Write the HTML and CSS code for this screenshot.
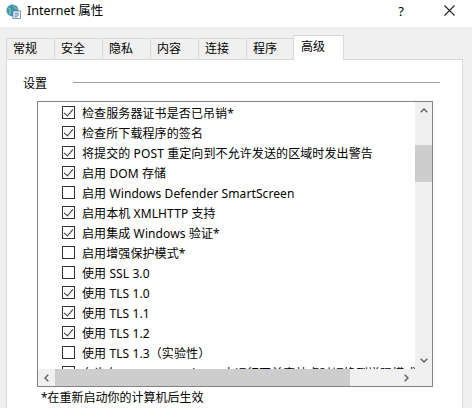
FILE: index.html
```html
<!DOCTYPE html>
<html lang="zh-CN">
<head>
<meta charset="utf-8">
<title>Internet 属性</title>
<link rel="stylesheet" href="styles.css">
</head>
<body>
<div class="window">
  <div class="titlebar">
    <svg class="app-icon" width="15" height="15" viewBox="0 0 15 15">
      <circle cx="6.5" cy="6.5" r="6" fill="#3f8fc9"/>
      <path d="M2 4.5 C4 3.5 5 5.5 4 7 C3 8.5 4.5 10 3.5 11" fill="none" stroke="#7cc46a" stroke-width="1.6"/>
      <path d="M7.5 1.5 C9 2.5 8 4 9.5 4.5 C11 5 11.5 3.5 12 5" fill="none" stroke="#7cc46a" stroke-width="1.4"/>
      <rect x="7" y="7" width="7.5" height="7.5" fill="#ffffff" stroke="#5b7fa8" stroke-width="0.8"/>
      <line x1="8.5" y1="9.2" x2="13" y2="9.2" stroke="#3a6ea5" stroke-width="0.9"/>
      <line x1="8.5" y1="11" x2="13" y2="11" stroke="#3a6ea5" stroke-width="0.9"/>
      <line x1="8.5" y1="12.8" x2="11.5" y2="12.8" stroke="#3a6ea5" stroke-width="0.9"/>
    </svg>
    <span class="title">Internet 属性</span>
    <span class="title-help">?</span>
    <svg class="title-close" width="11" height="11" viewBox="0 0 11 11">
      <path d="M0.5 0.5 L10.5 10.5 M10.5 0.5 L0.5 10.5" stroke="#222" stroke-width="1.1" fill="none"/>
    </svg>
  </div>

  <div class="tabs">
    <div class="tab">常规</div>
    <div class="tab">安全</div>
    <div class="tab">隐私</div>
    <div class="tab">内容</div>
    <div class="tab">连接</div>
    <div class="tab">程序</div>
    <div class="tab tab-active">高级</div>
  </div>

  <div class="panel">
    <div class="group-head">
      <span class="group-label">设置</span>
      <span class="group-line"></span>
    </div>

    <div class="listbox">
      <div class="list-content">
        <div class="row"><span class="cb checked"></span><span>检查服务器证书是否已吊销*</span></div>
        <div class="row"><span class="cb checked"></span><span>检查所下载程序的签名</span></div>
        <div class="row"><span class="cb checked"></span><span>将提交的 POST 重定向到不允许发送的区域时发出警告</span></div>
        <div class="row"><span class="cb checked"></span><span>启用 DOM 存储</span></div>
        <div class="row"><span class="cb"></span><span>启用 Windows Defender SmartScreen</span></div>
        <div class="row"><span class="cb checked"></span><span>启用本机 XMLHTTP 支持</span></div>
        <div class="row"><span class="cb checked"></span><span>启用集成 Windows 验证*</span></div>
        <div class="row"><span class="cb"></span><span>启用增强保护模式*</span></div>
        <div class="row"><span class="cb"></span><span>使用 SSL 3.0</span></div>
        <div class="row"><span class="cb checked"></span><span>使用 TLS 1.0</span></div>
        <div class="row"><span class="cb checked"></span><span>使用 TLS 1.1</span></div>
        <div class="row"><span class="cb checked"></span><span>使用 TLS 1.2</span></div>
        <div class="row"><span class="cb"></span><span>使用 TLS 1.3（实验性）</span></div>
        <div class="row"><span class="cb"></span><span>允许在 Internet Explorer 中运行不兼容站点时切换到增强模式</span></div>
      </div>

      <div class="vscroll">
        <div class="sbtn">
          <svg width="8" height="5" viewBox="0 0 8 5"><polyline points="0.7,4.3 4,1 7.3,4.3" fill="none" stroke="#606060" stroke-width="1.4"/></svg>
        </div>
        <div class="vtrack"><div class="vthumb"></div></div>
        <div class="sbtn">
          <svg width="8" height="5" viewBox="0 0 8 5"><polyline points="0.7,0.7 4,4 7.3,0.7" fill="none" stroke="#606060" stroke-width="1.4"/></svg>
        </div>
      </div>

      <div class="hscroll">
        <div class="sbtn">
          <svg width="5" height="8" viewBox="0 0 5 8"><polyline points="4.3,0.7 1,4 4.3,7.3" fill="none" stroke="#606060" stroke-width="1.4"/></svg>
        </div>
        <div class="htrack"><div class="hthumb"></div></div>
        <div class="sbtn">
          <svg width="5" height="8" viewBox="0 0 5 8"><polyline points="0.7,0.7 4,4 0.7,7.3" fill="none" stroke="#606060" stroke-width="1.4"/></svg>
        </div>
      </div>

      <div class="corner"></div>
    </div>

    <div class="note">*在重新启动你的计算机后生效</div>
  </div>
</div>
</body>
</html>
```

FILE: styles.css
```css
* {
  box-sizing: border-box;
}

html, body {
  margin: 0;
  padding: 0;
  width: 472px;
  height: 408px;
  overflow: hidden;
  background: #f0f0f0;
}

body {
  font-family: "Noto Sans", "Noto Sans CJK SC", sans-serif;
  font-size: 12px;
  color: #000;
}

.window {
  width: 472px;
  height: 408px;
  overflow: hidden;
}

/* title bar */
.titlebar {
  height: 27px;
  background: #fff;
  display: flex;
  align-items: flex-start;
  padding-top: 3px;
  padding-left: 6px;
}

.app-icon {
  flex: none;
  margin-top: 1px;
}

.title {
  margin-left: 6px;
  line-height: 16px;
  font-size: 12.5px;
}

.title-help {
  margin-left: auto;
  line-height: 16px;
  font-size: 13px;
  margin-right: 40px;
}

.title-close {
  margin-top: 2px;
  margin-right: 17px;
}

/* tabs */
.tabs {
  display: flex;
  align-items: flex-end;
  height: 32px;
  padding-left: 6px;
}

.tab {
  width: 49px;
  height: 21px;
  margin-right: -1px;
  border: 1px solid #d9d9d9;
  border-bottom: none;
  background: #f0f0f0;
  padding-left: 6px;
  line-height: 20px;
  position: relative;
}

.tab-active {
  width: 51px;
  height: 25px;
  margin-left: -1px;
  background: #fff;
  padding-left: 7px;
  line-height: 21px;
  margin-bottom: -1px;
  z-index: 1;
}

/* panel */
.panel {
  margin-left: 6px;
  width: 457px;
  height: 360px;
  background: #fff;
  border: 1px solid #d9d9d9;
  border-bottom: none;
}

.group-head {
  display: flex;
  align-items: center;
  height: 20px;
  margin-top: 13px;
  padding-left: 16px;
}

.group-line {
  flex: 1;
  height: 1px;
  background: #a0a0a0;
  margin-left: 26px;
  margin-right: 22px;
  margin-top: -1px;
}

.listbox {
  margin-top: 8px;
  margin-left: 30px;
  width: 396px;
  height: 286px;
  border: 1px solid #828282;
  display: grid;
  grid-template-columns: 1fr 17px;
  grid-template-rows: 1fr 17px;
  background: #fff;
}

.list-content {
  overflow: hidden;
  padding-top: 0.5px;
  padding-left: 24px;
  white-space: nowrap;
  letter-spacing: 0.1px;
}

.row {
  height: 20px;
  display: flex;
  align-items: center;
}

.cb {
  flex: none;
  width: 13px;
  height: 13px;
  border: 1px solid #333;
  margin-right: 7px;
  background: #fff;
  position: relative;
}

.cb.checked::after {
  content: "";
  position: absolute;
  left: 3px;
  top: 0px;
  width: 4px;
  height: 8px;
  border-right: 1.2px solid #333;
  border-bottom: 1.2px solid #333;
  transform: rotate(40deg);
}

/* scrollbars */
.vscroll {
  background: #f0f0f0;
  display: flex;
  flex-direction: column;
}

.sbtn {
  flex: none;
  width: 17px;
  height: 17px;
  display: flex;
  align-items: center;
  justify-content: center;
}

.vtrack {
  flex: 1;
  padding-top: 26px;
}

.vthumb {
  width: 17px;
  height: 37px;
  background: #cdcdcd;
}

.hscroll {
  background: #f0f0f0;
  display: flex;
}

.htrack {
  flex: 1;
  display: flex;
  align-items: stretch;
}

.hthumb {
  width: 295px;
  background: #cdcdcd;
}

.corner {
  background: #f0f0f0;
}

.note {
  margin-top: 3px;
  padding-left: 34px;
  line-height: 16px;
}
```
